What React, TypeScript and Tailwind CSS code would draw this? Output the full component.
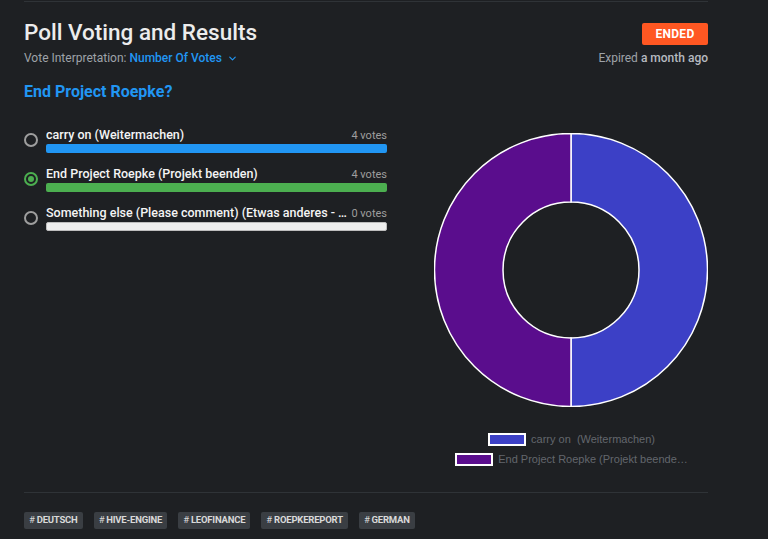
import { ChevronDown } from 'lucide-react';

const options = [
  { label: 'carry on (Weitermachen)', votes: 4, bar: 'bg-[#2196f3]', selected: false },
  { label: 'End Project Roepke (Projekt beenden)', votes: 4, bar: 'bg-[#4caf50]', selected: true },
  {
    label: 'Something else (Please comment) (Etwas anderes - bitte kommentieren)',
    votes: 0,
    bar: 'bg-[#eeeeee]',
    selected: false,
  },
];

const tags = ['deutsch', 'hive-engine', 'leofinance', 'roepkereport', 'german'];

function Donut() {
  // two equal halves, 4 votes each
  const cx = 137;
  const cy = 137;
  const R = 136.5;
  const r = 68;
  return (
    <svg width="274" height="274" viewBox="0 0 274 274">
      <path
        d={`M ${cx} ${cy - R} A ${R} ${R} 0 0 1 ${cx} ${cy + R} L ${cx} ${cy + r} A ${r} ${r} 0 0 0 ${cx} ${cy - r} Z`}
        fill="#3c40c6"
        stroke="#ffffff"
        strokeWidth="1.5"
      />
      <path
        d={`M ${cx} ${cy + R} A ${R} ${R} 0 0 1 ${cx} ${cy - R} L ${cx} ${cy - r} A ${r} ${r} 0 0 0 ${cx} ${cy + r} Z`}
        fill="#5a0d8d"
        stroke="#ffffff"
        strokeWidth="1.5"
      />
    </svg>
  );
}

export default function App() {
  return (
    <div className="min-h-[539px] w-[768px] bg-[#1e2023] font-['Roboto',sans-serif] pt-px">
      <div className="mx-6 w-[684px]">
        <div className="border-t border-[#2f3337]" />

        <div className="mt-[14px] flex items-start justify-between">
          <div>
            <h1 className="text-[22.5px] leading-8 font-medium text-[#ececec]">Poll Voting and Results</h1>
            <div className="mt-[2px] flex items-center text-xs leading-4 text-[#9ea3a9]">
              Vote Interpretation:
              <span className="ml-[3px] font-medium text-[#2196f3]">Number Of Votes</span>
              <ChevronDown size={11} strokeWidth={2.5} className="ml-[5px] text-[#2196f3]" />
            </div>
          </div>
          <div className="flex flex-col items-end">
            <span className="mt-[7px] flex h-[22px] w-[66px] items-center justify-center rounded-[2px] bg-[#ff5722] text-xs font-bold tracking-[0.3px] text-white">
              ENDED
            </span>
            <span className="mt-[5px] text-xs leading-4 text-[#9ea3a9]">
              Expired <span className="font-medium text-[#b6bac0]">a month ago</span>
            </span>
          </div>
        </div>

        <h2 className="mt-[14px] text-base leading-6 font-bold text-[#2196f3]">End Project Roepke?</h2>

        <div className="mt-[23px] flex items-start justify-between">
          <div className="flex w-[363px] flex-col gap-[13px]">
            {options.map((o) => (
              <div key={o.label} className="flex items-center gap-2">
                {o.selected ? (
                  <span className="flex h-[14px] w-[14px] shrink-0 items-center justify-center rounded-full border-2 border-[#4caf50]">
                    <span className="h-[6px] w-[6px] rounded-full bg-[#4caf50]" />
                  </span>
                ) : (
                  <span className="h-[14px] w-[14px] shrink-0 rounded-full border-2 border-[#9e9e9e]" />
                )}
                <div className="min-w-0 flex-1">
                  <div className="flex items-baseline">
                    <span className="min-w-0 flex-1 truncate text-[12.5px] leading-4 font-medium text-[#f4f4f4]">
                      {o.label}
                    </span>
                    <span className="shrink-0 text-[11px] leading-4 text-[#9e9e9e]">{o.votes} votes</span>
                  </div>
                  <div
                    className={`h-[9px] rounded-[2px] ${o.bar} ${o.votes === 0 ? 'border border-[#bdbdbd]' : ''}`}
                  />
                </div>
              </div>
            ))}
          </div>

          <div className="mt-[6px] flex w-[275px] flex-col items-center">
            <Donut />
            <div className="mt-[26px] flex flex-col items-center gap-[7px] font-['Liberation_Sans',Arial,sans-serif] text-[11px] leading-[13px] text-[#63676d]">
              <div className="ml-[2px] flex items-center gap-[5px]">
                <span className="h-[13px] w-[38px] border-2 border-white bg-[#3c40c6]" />
                <span className="whitespace-pre">carry on  (Weitermachen)</span>
              </div>
              <div className="ml-[2px] flex items-center gap-[5px]">
                <span className="h-[13px] w-[38px] border-2 border-white bg-[#5a0d8d]" />
                <span>End Project Roepke (Projekt beende…</span>
              </div>
            </div>
          </div>
        </div>

        <div className="mt-[26px] border-t border-[#2f3337]" />

        <div className="mt-[19px] flex gap-[11px]">
          {tags.map((t) => (
            <span
              key={t}
              className="flex h-[17px] items-center rounded-[2px] bg-[#3a3e43] px-[5px] text-[9.5px] font-bold tracking-[-0.2px] uppercase text-[#d9d9d9]"
            >
              <span className="mr-[2px] font-normal">#</span>
              {t}
            </span>
          ))}
        </div>
      </div>
    </div>
  );
}
